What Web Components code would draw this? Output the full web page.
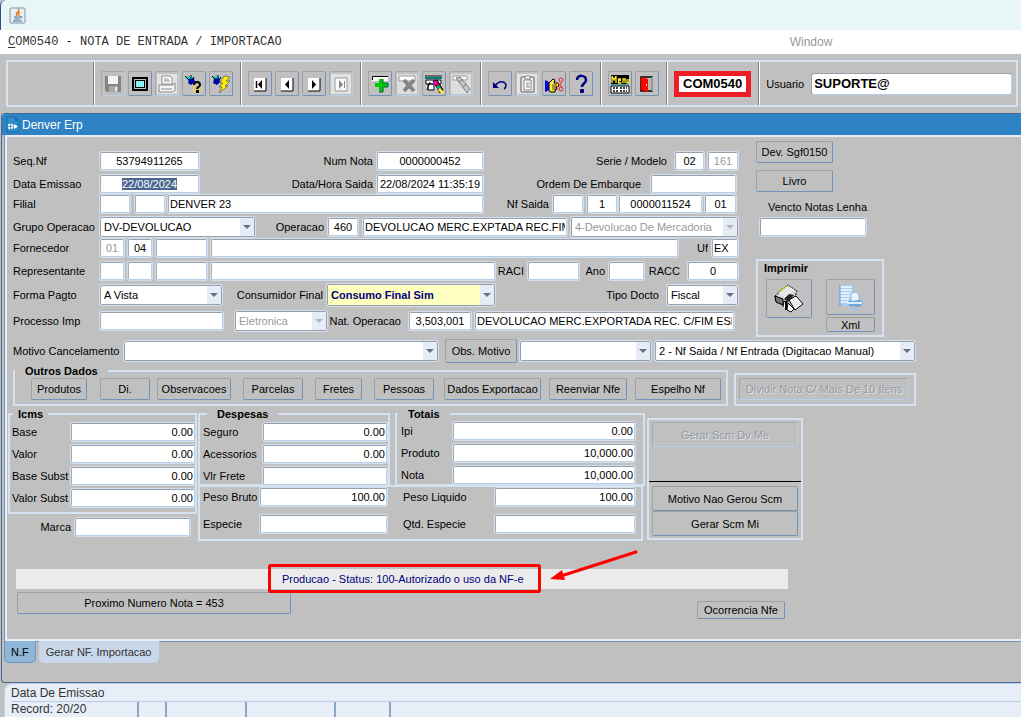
<!DOCTYPE html>
<html lang="pt-BR">
<head>
<meta charset="utf-8">
<title>COM0540 - Nota de Entrada / Importacao</title>
<style>
  html, body { height: 100%; }
  body {
    margin: 0;
    overflow: hidden;
    background: #c0c0c0;
    color: #000;
    font: 11px/14px "Liberation Sans", Arial, sans-serif;
  }
</style>
</head>
<body>
<erp-app>
  <erp-toolbar slot="toolbar"></erp-toolbar>
  <erp-window caption="Denver Erp">
    <nf-form></nf-form>
  </erp-window>
  <erp-record-bar slot="footer" hint="Data De Emissao" record="Record: 20/20"></erp-record-bar>
</erp-app>

<script>
const ICONS = {
  java: `<rect x="1" y="1" width="15" height="15" rx="1" fill="#e9eef2" stroke="#7f93a3"/><path d="M9 2c3 2-4 4-1 7M11 5c-2 1-2 2-1 4" stroke="#e8751a" stroke-width="1.300" fill="none"/><path d="M5 10h6M5.500 12h5M4 14h9" stroke="#3f6f99"/><path d="M11 9.500c3-.5 2 2 0 2" stroke="#3f6f99" fill="none"/>`,
  save: `<path d="M2 2h16v16H4l-2-2z" fill="#848484"/><path d="M5 2h10v8H5z" fill="#f4f4f4"/><path d="M6 12h9v6H6z" fill="#a8a8a8"/><path d="M12 13h2v4h-2z" fill="#eee"/>`,
  screen: `<rect x="3" y="4" width="14" height="12" fill="#c0c0c0" stroke="#000" stroke-width="2"/><rect x="5.500" y="6.500" width="9" height="7" fill="#9ff" stroke="#000"/><path d="M6 8h8M6 10h8M6 12h8" stroke="#5cc" stroke-dasharray="1 1"/>`,
  print: `<rect width="20" height="20" fill="#e2e2e2"/><path d="M5 2h8l2 2v6H5z" fill="#fff" stroke="#888"/><path d="M7 5h5M7 7h6" stroke="#888"/><path d="M2 11h14l2-2v7l-2 2H2z" fill="#f6f6f6" stroke="#888"/><path d="M4 15h11" stroke="#888"/>`,
  query: `<path d="M1 2l3 1 1-2 2 3 3-1-1 5-3 1-4-5z" fill="#0cc"/><path d="M5 5l5-1 1 4-4 3-3-2z" fill="#00a"/><path d="M1 2l4 4M7 1v3M10 3L8 6" stroke="#000"/><path d="M9 12h10M9 14h10M9 16h10M9 18h10" stroke="#ffe800" stroke-dasharray="1 1"/><path d="M10 11c0-4 6-4 6 0 0 2-3 2-3 4" fill="none" stroke="#000" stroke-width="2"/><rect x="12" y="16" width="3" height="3"/>`,
  exec: `<path d="M1 2l3 1 1-2 2 3 3-1-1 5-3 1-4-5z" fill="#0cc"/><path d="M3 5l5-1 1 4-3 3-4-2z" fill="#00a"/><path d="M1 2l4 4M7 1v3M10 3L8 6" stroke="#000"/><path d="M13 2l6 1-4 4h4l-5 5h3l-9 7 3-6H8l4-4H9z" fill="#ffee00" stroke="#555" stroke-width=".7"/>`,
  first: `<path d="M4 4h12v13H4z" fill="#fff"/><path d="M16 4v13H4" fill="none" stroke="#000"/><path d="M6.500 7v7" stroke="#000" stroke-width="1.500"/><path d="M12 6v9l-4-4.500z"/>`,
  prev: `<path d="M4 4h12v13H4z" fill="#fff"/><path d="M16 4v13H4" fill="none" stroke="#000"/><path d="M12 6v9l-4-4.500z"/>`,
  next: `<path d="M4 4h12v13H4z" fill="#fff"/><path d="M16 4v13H4" fill="none" stroke="#000"/><path d="M8 6v9l4-4.500z"/>`,
  last: `<rect width="20" height="20" fill="#e2e2e2"/><path d="M4 4h12v13H4z" fill="#fafafa" stroke="#999"/><path d="M13.500 7v7" stroke="#888"/><path d="M8 6v9l4-4.500z" fill="#888"/>`,
  insert: `<path d="M2 2h16v5H2z" fill="#fff"/><path d="M2.500 6V2.500H18" fill="none" stroke="#000"/><path d="M9 5h4v4h5v4h-5v5H9v-5H5V9h4z" fill="#00c800"/><path d="M13 5v4h5v4h-5v5H9" fill="none" stroke="#064"/>`,
  remove: `<rect width="20" height="20" fill="#dedede"/><path d="M2 2h16v5H2z" fill="#fff" stroke="#999"/><path d="M7 6l10 11M17 6L7 17" stroke="#848484" stroke-width="4"/>`,
  find: `<path d="M2 1h16v14H2z" fill="#d8d8d8"/><path d="M1 2h17" stroke="#000"/><path d="M1 4h17" stroke="#008080" stroke-width="2"/><path d="M2 6h15v4H2zM4 10h6v6H4z" fill="#fff" stroke="#000"/><path d="M3 16l3-8" stroke="#000"/><path d="M9 7l4-1 6 10-3 3z" fill="#c00030" stroke="#000"/><circle cx="11" cy="9" r="2" fill="#e0d"/><path d="M12 13l3-2 2 3-3 2z" fill="#0a7"/><path d="M15 15l4 4" stroke="#ffee40" stroke-width="3"/>`,
  cut: `<rect width="20" height="20" fill="#dedede"/><path d="M2 2h14v4H2z" fill="#fff" stroke="#999"/><path d="M5 4l4-1 10 12-3 4z" fill="#c4c4c4" stroke="#858585"/><path d="M8 8l4-3M12 13l4-3" stroke="#777"/>`,
  undo: `<path d="M5 12c4-6 10-5 11-1 0 2 0 3-2 4" fill="none" stroke="#000080" stroke-width="1.500"/><path d="M3 8v6h6z" fill="#000080"/>`,
  paste: `<rect width="20" height="20" fill="#e4e4e4"/><rect x="4" y="3" width="13" height="15" rx="1" fill="#eee" stroke="#888" stroke-width="1.500"/><path d="M7 6h7v10H7z" fill="#fff" stroke="#888"/><path d="M8 2h5v3H8z" fill="#fff" stroke="#888"/><path d="M9 9h4M9 11h3M9 13h4" stroke="#888"/>`,
  hand: `<path d="M1 6l4 2v8l-4 2z" fill="#00d"/><path d="M5 9l4-4 2 1-1 3h4l1 3-3 1 1 2-2 1v2H7l-2-1z" fill="#ffe94a" stroke="#000"/><path d="M8 11h5M8 13h4M8 15h4" stroke="#000" stroke-width=".7"/><path d="M13 9l5 4M13 13l5-4" stroke="#e22"/><circle cx="17" cy="6" r="2" fill="none" stroke="#e22"/><circle cx="17" cy="15" r="2" fill="none" stroke="#e22"/>`,
  help: `<path d="M6 6c0-6 9-5 9 0 0 4-4 3-4 7" fill="none" stroke="#000080" stroke-width="2.500"/><rect x="9" y="15" width="4" height="4" rx="1" fill="#000080"/>`,
  menu: `<path d="M1 1h18v9H1z" fill="#000"/><path d="M2 9V2l2 4 2-4v7M11 6.500H8.500V9h3M8.500 6.500V5H11M13 9V5h2v4M17 5v4h2V5" fill="none" stroke="#ffec30" stroke-width="1.300"/><path d="M1 12h18v7H1z" fill="#fff" stroke="#000"/><path d="M1 11h18" stroke="#008080"/><path d="M3 14h5M10 14h7M3 17h5M10 17h7" stroke="#000" stroke-width="1.500" stroke-dasharray="2 1"/>`,
  exit: `<path d="M4 3h11v14H4z" fill="#b8b8b8" stroke="#000" stroke-width="1.500"/><path d="M4 3l7 2v13l-7-2z" fill="#f00"/><path d="M15 3v14" stroke="#fff"/><rect x="9" y="10" width="1" height="2" fill="#ff0"/>`,
  form: `<path d="M1 1h8l4 4v11H1z" fill="#2f8bc9" stroke="#1c6fa8"/><path d="M9 1v4h4" fill="#176aa3"/><circle cx="4.500" cy="10.500" r="2" fill="none" stroke="#fff" stroke-width="2" stroke-dasharray="2 1"/><path d="M8 8v5l4-2.500z" fill="#fff"/>`,
  printer: `<path d="M2 13L15 2l9 6-2 5-11 9-8-3z" fill="#d8d8d8" stroke="#000" stroke-dasharray="2 1"/><path d="M2 13l8 3v6l-7-3z" fill="#777" stroke="#000"/><path d="M7 12l10-8M9 13l10-8M11 14l10-8M6 10l9-7" stroke="#fff"/><path d="M5 9L14 3" stroke="#b6b51d" stroke-width="1.500"/><path d="M11 16l5-5 5 1-6 7z" fill="#222"/><path d="M16 17l7-4 7 8-8 6z" fill="#fff" stroke="#000"/><path d="M20 17l5 6M18 18l5 6M22 16l5 6" stroke="#ccc"/><path d="M10 24l1-6 2 1v7M14 27l1-7 6 6-3 3z" fill="#fff" stroke="#000"/><path d="M13 18v9" stroke="#000" stroke-width="2"/>`,
  xml: `<path d="M3 2h13v21H3z" fill="#a9cdf0"/><path d="M3 4h12M3 7h12M3 10h12M3 13h12M3 16h9M3 19h9" stroke="#f4faff" stroke-width="1.500"/><path d="M3 2v21" stroke="#5d9bd8"/><path d="M14 10l5-1 3 2v9h-8z" fill="#eaf4fe" stroke="#8bb4de"/><path d="M11 18l13-1 2 3-3 4-11-1z" fill="#6fa8dc"/><path d="M10 20h15" stroke="#dceeff" stroke-width="2"/><path d="M13 26h10" stroke="#9fc3e6" stroke-width="2"/>`
};

function icon(name, w, h) {
  return `<svg width="${w}" height="${h}" viewBox="0 0 ${w} ${h}" aria-hidden="true">${ICONS[name]}</svg>`;
}

const BUTTON_CSS = `
  button {
    box-sizing: border-box;
    display: flex;
    align-items: center;
    justify-content: center;
    width: 100%;
    height: 100%;
    margin: 0;
    padding: 0;
    border: 1px solid;
    border-color: #a0a0a0 #6f93b9 #6f93b9 #a0a0a0;
    border-radius: 2px;
    background: #c0c0c0;
    color: #000;
    font: inherit;
    white-space: nowrap;
  }
  button:disabled {
    border-color: #a8a8a8 #b8cfe5 #b8cfe5 #a8a8a8;
    color: #999;
    text-shadow: 1px 1px 0 #dbe4ee;
  }
`;

// Shared by everything that sits in a row: w, h, gap, lw and lg are plain pixel attributes
class ErpControl extends HTMLElement {
  constructor() {
    super();
    this.attachShadow({ mode: 'open' });
  }

  attr(name, fallback = '') {
    return this.hasAttribute(name) ? this.getAttribute(name) : fallback;
  }

  connectedCallback() {
    for (const name of ['w', 'h', 'gap', 'lw', 'lg']) {
      if (this.hasAttribute(name)) {
        this.style.setProperty('--' + name, this.getAttribute(name) + 'px');
      }
    }
    this.render();
  }
}

const FIELD_CSS = `
  :host {
    display: flex;
    align-items: center;
    flex: none;
    margin-left: var(--gap, 0);
  }
  label {
    box-sizing: border-box;
    flex: none;
    width: var(--lw, 0);
    padding-right: var(--lg, 4px);
    text-align: right;
    white-space: nowrap;
  }
  :host([start]) label { text-align: left; padding-right: 0; }
  .box {
    box-sizing: border-box;
    width: var(--w, 100px);
    height: var(--h, 18px);
    border: 1px solid;
    border-color: #98a0ac #b8cfe5 #b8cfe5 #a3adba;
    border-radius: 2px;
    background: #fff;
    box-shadow: 0 0 0 1px #d3dfec;
    color: #000;
    font: inherit;
  }
  :disabled { color: #999 !important; opacity: 1; }
`;

class ErpField extends ErpControl {
  render() {
    const label = this.attr('label');
    this.shadowRoot.innerHTML = `
      <style>
        ${FIELD_CSS}
        input { margin: 0; padding: 0 1px; outline: none; text-align: ${this.attr('align', 'left')}; }
        input::selection { background: #4a6690; color: #fff; }
      </style>
      ${label ? `<label for="i">${label}</label>` : ''}
      <input id="i" class="box" type="text" value="${this.attr('value')}"
        ${label ? '' : `aria-label="${this.attr('name', 'campo')}"`}
        ${this.hasAttribute('muted') ? 'disabled' : ''}>
    `;
    if (this.hasAttribute('selected')) {
      const input = this.shadowRoot.querySelector('input');
      input.focus();
      input.select();
    }
  }
}
customElements.define('erp-field', ErpField);

class ErpCombo extends ErpControl {
  render() {
    const label = this.attr('label');
    const muted = this.hasAttribute('muted');
    this.shadowRoot.innerHTML = `
      <style>
        ${FIELD_CSS}
        .wrap { display: grid; grid-template-columns: 1fr 15px; width: var(--w); height: var(--h, 20px); }
        .box { grid-area: 1 / 1 / 2 / 3; width: 100%; height: 100%; border-color: #98a0ac; margin: 0; padding: 0 15px 0 3px; appearance: none; outline: none; }
        .arrow {
          grid-area: 1 / 2;
          display: flex;
          align-items: center;
          justify-content: center;
          margin: 1px 1px 1px 0;
          background: #e6ecf5;
          pointer-events: none;
          z-index: 1;
        }
        :host([accent]) .box { background: #ffffc0; color: #000080; font-weight: bold; }
      </style>
      ${label ? `<label for="s">${label}</label>` : ''}
      <div class="wrap">
        <select id="s" class="box" ${label ? '' : `aria-label="${this.attr('name', 'lista')}"`} ${muted ? 'disabled' : ''}>
          <option>${this.attr('value')}</option>
        </select>
        <span class="arrow"><svg width="8" height="4" viewBox="0 0 8 4"><path d="M0 0h8L4 4z" fill="${muted ? '#b5b5b5' : '#63708a'}"/></svg></span>
      </div>
    `;
  }
}
customElements.define('erp-combo', ErpCombo);

class ErpButton extends ErpControl {
  render() {
    this.shadowRoot.innerHTML = `
      <style>
        :host { display: block; flex: none; box-sizing: border-box; width: var(--w, auto); height: var(--h, 22px); margin-left: var(--gap, 0); }
        ${BUTTON_CSS}
      </style>
      <button type="button" ${this.hasAttribute('muted') ? 'disabled' : ''}><slot></slot></button>
    `;
  }
}
customElements.define('erp-button', ErpButton);

class ErpIconButton extends ErpControl {
  render() {
    const name = this.attr('icon');
    const size = Number(this.attr('size', '20'));
    this.shadowRoot.innerHTML = `
      <style>
        :host { display: block; flex: none; width: var(--w, 24px); height: var(--h, 25px); }
        ${BUTTON_CSS}
      </style>
      <button type="button" aria-label="${name}" ${this.hasAttribute('muted') ? 'disabled' : ''}>${icon(name, size, size)}</button>
    `;
  }
}
customElements.define('erp-icon-button', ErpIconButton);

class ErpRow extends HTMLElement {
  constructor() {
    super();
    this.attachShadow({ mode: 'open' });
  }

  connectedCallback() {
    this.shadowRoot.innerHTML = `
      <style>
        :host { display: flex; align-items: center; margin-top: ${this.getAttribute('top') || 0}px; }
      </style>
      <slot></slot>
    `;
  }
}
customElements.define('erp-row', ErpRow);

class ErpGroup extends HTMLElement {
  constructor() {
    super();
    this.attachShadow({ mode: 'open' });
  }

  connectedCallback() {
    const title = this.getAttribute('legend');
    this.shadowRoot.innerHTML = `
      <style>
        :host { display: block; box-sizing: border-box; }
        fieldset {
          box-sizing: border-box;
          width: 100%;
          height: 100%;
          min-width: 0;
          margin: 0;
          padding: var(--pad, 0);
          border: 2px solid #d5e2f1;
        }
        legend { margin-left: var(--indent, 0); padding: 0 var(--legend-pad, 10px); font-weight: bold; }
      </style>
      <fieldset>${title ? `<legend>${title}</legend>` : ''}<slot></slot></fieldset>
    `;
  }
}
customElements.define('erp-group', ErpGroup);

class ErpToolbar extends HTMLElement {
  constructor() {
    super();
    const shadowRoot = this.attachShadow({ mode: 'open' });
    const groups = [
      ['save!', 'screen', 'print!', 'query', 'exec'],
      ['first', 'prev', 'next', 'last!'],
      ['insert', 'remove!', 'find', 'cut!'],
      ['undo', 'paste!', 'hand', 'help'],
      ['menu', 'exit']
    ];
    shadowRoot.innerHTML = `
      <style>
        :host { display: block; padding: 6px 3px 6px 6px; background: #c0c0c0; }
        .bar { display: flex; height: 43px; border: 2px solid #d5e2f1; }
        .cell { display: flex; align-items: center; gap: 3px; padding: 0 7px; border-right: 1px solid #808080; box-shadow: 1px 0 0 #fff; }
        .blank { width: 71px; }
        .code { border: 5px solid #ee1c24; background: #fff; padding: 0 4px; font-size: 13px; font-weight: bold; line-height: 16px; }
        .user { flex: 1; display: flex; align-items: center; gap: 7px; padding: 0 4px 0 7px; }
        input { flex: 1; min-width: 0; box-sizing: border-box; height: 22px; margin: 0; padding: 0 2px; border: 1px solid #98a0ac; border-bottom-color: #b8cfe5; border-right-color: #b8cfe5; border-radius: 3px; font: bold 13px "Liberation Sans", Arial, sans-serif; }
      </style>
      <div class="bar">
        <div class="cell blank"></div>
        ${groups.map(g => `<div class="cell">${g.map(n =>
          `<erp-icon-button icon="${n.replace('!', '')}" ${n.endsWith('!') ? 'muted' : ''}></erp-icon-button>`).join('')}</div>`).join('')}
        <div class="cell"><span class="code">COM0540</span></div>
        <div class="user"><label for="u">Usuario</label><input id="u" value="SUPORTE@"></div>
      </div>
    `;
  }
}
customElements.define('erp-toolbar', ErpToolbar);

class ErpWindow extends HTMLElement {
  constructor() {
    super();
    const shadowRoot = this.attachShadow({ mode: 'open' });
    shadowRoot.innerHTML = `
      <style>
        :host { display: flex; flex-direction: column; flex: 1; min-height: 0; box-sizing: border-box; border: 1px solid #4b6a93; border-width: 1px 0 1px 1px; margin-left: 1px; border-radius: 4px 0 0 4px; }
        header { display: flex; align-items: center; gap: 2px; height: 21px; padding-left: 4px; background: #2d83c4; border-radius: 4px 0 0 0; color: #fff; font-size: 12px; }
        .canvas { flex: 1; margin-left: 3px; border: 2px solid #e8eef7; border-right: 0; box-shadow: -1px 0 0 #6f93b9, 0 1px 0 #6f93b9; }
        nav { display: flex; gap: 3px; height: 41px; margin-left: 2px; align-items: flex-start; }
        nav button { height: 22px; padding: 0 6px; border: 1px solid #c9d7ea; border-top: 0; border-radius: 0 0 5px 5px; background: #c9d7ea; color: #333; font: inherit; }
        nav button[aria-selected=true] { border-color: #6f93b9; background: #8fb5d8; color: #000; }
      </style>
      <header>${icon('form', 14, 17)}<span id="caption"></span></header>
      <div class="canvas"><slot></slot></div>
      <nav role="tablist">
        <button type="button" role="tab" aria-selected="true">N.F</button>
        <button type="button" role="tab" aria-selected="false">Gerar NF. Importacao</button>
      </nav>
    `;
  }

  connectedCallback() {
    this.shadowRoot.getElementById('caption').textContent = this.getAttribute('caption');
  }
}
customElements.define('erp-window', ErpWindow);

class ErpRecordBar extends HTMLElement {
  constructor() {
    super();
    this.attachShadow({ mode: 'open' });
  }

  connectedCallback() {
    this.shadowRoot.innerHTML = `
      <style>
        :host { display: block; box-sizing: border-box; margin-left: 4px; padding-left: 6px; border: 1px solid #b8cfe5; border-width: 1px 0 0 1px; border-radius: 8px 0 0 0; background: #e8eef7; color: #333; font-size: 12px; }
        div { height: 17px; line-height: 18px; border-bottom: 1px solid #b8cfe5; }
        footer { display: grid; grid-template-columns: 128px 28px 80px 89px 55px; line-height: 15px; }
        footer span { box-sizing: border-box; height: 15px; border-right: 2px solid #8ba6c6; }
      </style>
      <div>${this.getAttribute('hint')}</div>
      <footer><span>${this.getAttribute('record')}</span><span></span><span></span><span></span><span></span></footer>
    `;
  }
}
customElements.define('erp-record-bar', ErpRecordBar);

class ErpApp extends HTMLElement {
  constructor() {
    super();
    const shadowRoot = this.attachShadow({ mode: 'open' });
    shadowRoot.innerHTML = `
      <style>
        :host { display: flex; flex-direction: column; height: 100vh; background: #c0c0c0; }
        .title { display: flex; align-items: center; height: 30px; padding-left: 8px; border-left: 1px solid #2d4f8f; border-radius: 6px 0 0 0; background: #e8f6f8; }
        .menu { display: flex; align-items: center; height: 24px; padding-left: 8px; background: #fff; color: #333; font: 12px "Liberation Mono", monospace; }
        .menu div { flex: none; }
        .menu a { flex: none; color: #999; text-decoration: none; font: 12px "Liberation Sans", Arial, sans-serif; }
        .menu i { flex: 0 1 508px; }
        u { text-underline-offset: 2px; }
      </style>
      <div class="title">${icon('java', 17, 17)}</div>
      <div class="menu"><div><u>C</u>OM0540 - NOTA DE ENTRADA / IMPORTACAO</div><i></i><a href="#window">Window</a></div>
      <slot name="toolbar"></slot>
      <slot></slot>
      <slot name="footer"></slot>
    `;
  }
}
customElements.define('erp-app', ErpApp);

class NfForm extends HTMLElement {
  constructor() {
    super();
    const shadowRoot = this.attachShadow({ mode: 'open' });
    shadowRoot.innerHTML = `
      <style>
        :host { display: block; padding: 4px 0 0 1px; }
        .top { display: grid; grid-template-columns: minmax(0, 733px) 130px; column-gap: 10px; margin-left: 5px; }
        .top > section:first-child { padding-top: 11px; }
        .side { display: flex; flex-direction: column; align-items: flex-start; gap: 7px; }
        .vencto { display: grid; margin: 1px 0 0 4px; gap: 4px; }
        .vencto label { margin-left: 8px; }
        .vencto input { box-sizing: border-box; width: 106px; height: 18px; margin: 0; border: 1px solid #98a0ac; border-right-color: #b8cfe5; border-bottom-color: #b8cfe5; border-radius: 2px; box-shadow: 0 0 0 1px #d3dfec; }
        .print { width: 128px; height: 78px; margin-top: 16px; --pad: 0 8px; }
        .print h2 { margin: 0 0 4px -2px; font-size: 11px; line-height: 14px; }
        .print .pair { display: grid; grid-template-columns: 46px 49px; gap: 14px; align-items: start; }
        .print .pair div { display: grid; gap: 2px; }
        .full { margin-left: 5px; }
        .outros { display: flex; align-items: flex-end; gap: 6px; margin: 1px 0 0 5px; }
        .outros .main { width: 715px; height: 42px; --indent: -16px; --pad: 0 0 0 16px; }
        .outros .other { width: 182px; height: 33px; --pad: 3px; }
        .outros .main div { display: flex; }
        .blocks { display: flex; align-items: flex-start; gap: 1px; margin-top: 1px; }
        .icms { width: 189px; height: 107px; --pad: 2px 0 0 2px; --indent: 1px; --legend-pad: 5px; }
        .marca { margin: 4px 0 0 5px; }
        .stack { display: grid; gap: 4px; justify-items: start; }
        .middle { display: grid; grid-template-columns: 192px 250px; column-gap: 5px; }
        .despesas { height: 79px; --pad: 2px 0 0 3px; --indent: 4px; }
        .totais { height: 79px; --pad: 1px 0 0 4px; --indent: -3px; }
        .pesos { grid-column: 1 / 3; width: 445px; height: 56px; margin-top: -1px; --pad: 1px 0 0 3px; }
        .pesos div { display: grid; grid-template-columns: 200px 1fr; row-gap: 9px; }
        .scm { width: 156px; height: 122px; margin: 11px 0 0 1px; --pad: 2px 3px; }
        .scm hr { height: 1px; margin: 34px -3px 4px; border: 0; background: #000; }
        .status { position: relative; display: flex; max-width: 772px; height: 20px; margin: 28px 12px 0 8px; padding-left: 266px; box-sizing: border-box; background: #ebebeb; color: #000080; line-height: 20px; }
        .status svg { position: absolute; left: 250px; top: -19px; }
        .bottom { display: flex; justify-content: space-between; max-width: 768px; margin: 3px 0 0 9px; }
        .bottom erp-button:last-child { margin-top: 9px; }
      </style>
      <div class="top">
        <section>
          <erp-row>
            <erp-field start label="Seq.Nf" lw="87" w="99" align="center" value="53794911265"></erp-field>
            <erp-field label="Num Nota" lw="178" w="106" align="center" value="0000000452"></erp-field>
            <erp-field label="Serie / Modelo" lw="192" lg="8" w="29" align="center" value="02"></erp-field>
            <erp-field gap="4" w="30" align="center" value="161" muted name="Modelo"></erp-field>
          </erp-row>
          <erp-row top="5">
            <erp-field start selected label="Data Emissao" lw="87" w="99" align="center" value="22/08/2024"></erp-field>
            <erp-field label="Data/Hora Saida" lw="178" w="106" align="center" value="22/08/2024 11:35:19"></erp-field>
            <erp-field label="Ordem De Embarque" lw="168" lg="10" w="85"></erp-field>
          </erp-row>
          <erp-row top="2">
            <erp-field start label="Filial" lw="87" w="30"></erp-field>
            <erp-field gap="5" w="30"></erp-field>
            <erp-field gap="3" w="315" value="DENVER 23"></erp-field>
            <erp-field label="Nf Saida" lw="70" w="30"></erp-field>
            <erp-field gap="4" w="30" align="center" value="1"></erp-field>
            <erp-field gap="2" w="83" align="center" value="0000011524"></erp-field>
            <erp-field gap="3" w="31" align="center" value="01"></erp-field>
          </erp-row>
          <erp-row top="4">
            <erp-combo start label="Grupo Operacao" lw="87" w="155" value="DV-DEVOLUCAO"></erp-combo>
            <erp-field label="Operacao" lw="73" w="30" align="center" value="460"></erp-field>
            <erp-field gap="5" w="204" value="DEVOLUCAO MERC.EXPTADA REC.FIM ES"></erp-field>
            <erp-combo gap="4" w="167" value="4-Devolucao De Mercadoria" muted></erp-combo>
          </erp-row>
          <erp-row top="2">
            <erp-field start label="Fornecedor" lw="87" w="24" align="center" value="01" muted></erp-field>
            <erp-field gap="4" w="24" align="center" value="04"></erp-field>
            <erp-field gap="4" w="51"></erp-field>
            <erp-field gap="4" w="467"></erp-field>
            <erp-field label="Uf" lw="34" w="26" value="EX"></erp-field>
          </erp-row>
          <erp-row top="5">
            <erp-field start label="Representante" lw="87" w="24"></erp-field>
            <erp-field gap="4" w="24"></erp-field>
            <erp-field gap="4" w="51"></erp-field>
            <erp-field gap="4" w="284"></erp-field>
            <erp-field label="RACI" lw="33" w="51"></erp-field>
            <erp-field label="Ano" lw="30" w="35"></erp-field>
            <erp-field label="RACC" lw="44" lg="8" w="50" align="center" value="0"></erp-field>
          </erp-row>
          <erp-row top="4">
            <erp-combo start label="Forma Pagto" lw="87" w="122" value="A Vista"></erp-combo>
            <erp-combo label="Consumidor Final" lw="105" w="168" h="22" accent value="Consumo Final Sim"></erp-combo>
            <erp-combo label="Tipo Docto" lw="172" lg="8" w="71" value="Fiscal"></erp-combo>
          </erp-row>
          <erp-row top="5">
            <erp-field start label="Processo Imp" lw="87" w="123"></erp-field>
            <erp-combo gap="12" w="92" value="Eletronica" muted></erp-combo>
            <erp-field label="Nat. Operacao" lw="82" lg="8" w="62" align="center" value="3,503,001"></erp-field>
            <erp-field gap="4" w="259" value="DEVOLUCAO MERC.EXPORTADA REC. C/FIM ESPECI"></erp-field>
          </erp-row>
        </section>
        <section class="side">
          <erp-button w="77">Dev. Sgf0150</erp-button>
          <erp-button w="77">Livro</erp-button>
          <div class="vencto"><label for="v">Vencto Notas Lenha</label><input id="v" type="text"></div>
          <erp-group class="print">
            <h2>Imprimir</h2>
            <div class="pair">
              <erp-icon-button icon="printer" size="32" w="46" h="39"></erp-icon-button>
              <div>
                <erp-icon-button icon="xml" size="28" w="49" h="36"></erp-icon-button>
                <erp-button h="15">Xml</erp-button>
              </div>
            </div>
          </erp-group>
        </section>
      </div>
      <erp-row top="2" class="full">
        <erp-combo start label="Motivo Cancelamento" lw="111" w="314" value=""></erp-combo>
        <erp-button gap="7" w="72" h="24">Obs. Motivo</erp-button>
        <erp-combo gap="3" w="131" value=""></erp-combo>
        <erp-combo gap="4" w="260" value="2 - Nf Saida / Nf Entrada (Digitacao Manual)"></erp-combo>
      </erp-row>
      <div class="outros">
        <erp-group class="main" legend="Outros Dados">
          <div>
            <erp-button w="56">Produtos</erp-button>
            <erp-button gap="13" w="50">Di.</erp-button>
            <erp-button gap="7" w="74">Observacoes</erp-button>
            <erp-button gap="12" w="60">Parcelas</erp-button>
            <erp-button gap="12" w="47">Fretes</erp-button>
            <erp-button gap="12" w="60">Pessoas</erp-button>
            <erp-button gap="10" w="97">Dados Exportacao</erp-button>
            <erp-button gap="8" w="78">Reenviar Nfe</erp-button>
            <erp-button gap="8" w="86">Espelho Nf</erp-button>
          </div>
        </erp-group>
        <erp-group class="other"><erp-button w="170" muted>Dividir Nota C/ Mais De 10 Itens</erp-button></erp-group>
      </div>
      <div class="blocks">
        <div>
          <erp-group class="icms" legend="Icms">
            <div class="stack">
              <erp-field start label="Base" lw="59" w="124" align="right" value="0.00"></erp-field>
              <erp-field start label="Valor" lw="59" w="124" align="right" value="0.00"></erp-field>
              <erp-field start label="Base Subst" lw="59" w="124" align="right" value="0.00"></erp-field>
              <erp-field start label="Valor Subst" lw="59" w="124" align="right" value="0.00"></erp-field>
            </div>
          </erp-group>
          <erp-field class="marca" label="Marca" lw="62" w="115"></erp-field>
        </div>
        <div class="middle">
          <erp-group class="despesas" legend="Despesas">
            <div class="stack">
              <erp-field start label="Seguro" lw="60" w="124" align="right" value="0.00"></erp-field>
              <erp-field start label="Acessorios" lw="60" w="124" align="right" value="0.00"></erp-field>
              <erp-field start label="Vlr Frete" lw="60" w="124"></erp-field>
            </div>
          </erp-group>
          <erp-group class="totais" legend="Totais">
            <div class="stack">
              <erp-field start label="Ipi" lw="52" w="182" align="right" value="0.00"></erp-field>
              <erp-field start label="Produto" lw="52" w="182" align="right" value="10,000.00"></erp-field>
              <erp-field start label="Nota" lw="52" w="182" align="right" value="10,000.00"></erp-field>
            </div>
          </erp-group>
          <erp-group class="pesos">
            <div>
              <erp-field start label="Peso Bruto" lw="57" w="127" align="right" value="100.00"></erp-field>
              <erp-field start label="Peso Liquido" lw="92" w="140" align="right" value="100.00"></erp-field>
              <erp-field start label="Especie" lw="57" w="127"></erp-field>
              <erp-field start label="Qtd. Especie" lw="92" w="140"></erp-field>
            </div>
          </erp-group>
        </div>
        <erp-group class="scm">
          <erp-button h="25" muted>Gerar Scm Dv Me</erp-button>
          <hr>
          <erp-button h="25">Motivo Nao Gerou Scm</erp-button>
          <erp-button h="25">Gerar Scm Mi</erp-button>
        </erp-group>
      </div>
      <div class="status">
        <span>Producao - Status: 100-Autorizado o uso da NF-e</span>
        <svg width="374" height="46" viewBox="0 0 374 46" aria-hidden="true">
          <rect x="3.500" y="15.500" width="270" height="26" rx="1" fill="none" stroke="#f00" stroke-width="3"/>
          <path d="M370 2L298 25" stroke="#f00" stroke-width="3" stroke-linecap="round"/>
          <path d="M284 29l12-9 3 10z" fill="#f00"/>
        </svg>
      </div>
      <div class="bottom">
        <erp-button w="274">Proximo Numero Nota = 453</erp-button>
        <erp-button w="88" h="18">Ocorrencia Nfe</erp-button>
      </div>
    `;
  }
}
customElements.define('nf-form', NfForm);
</script>
</body>
</html>
